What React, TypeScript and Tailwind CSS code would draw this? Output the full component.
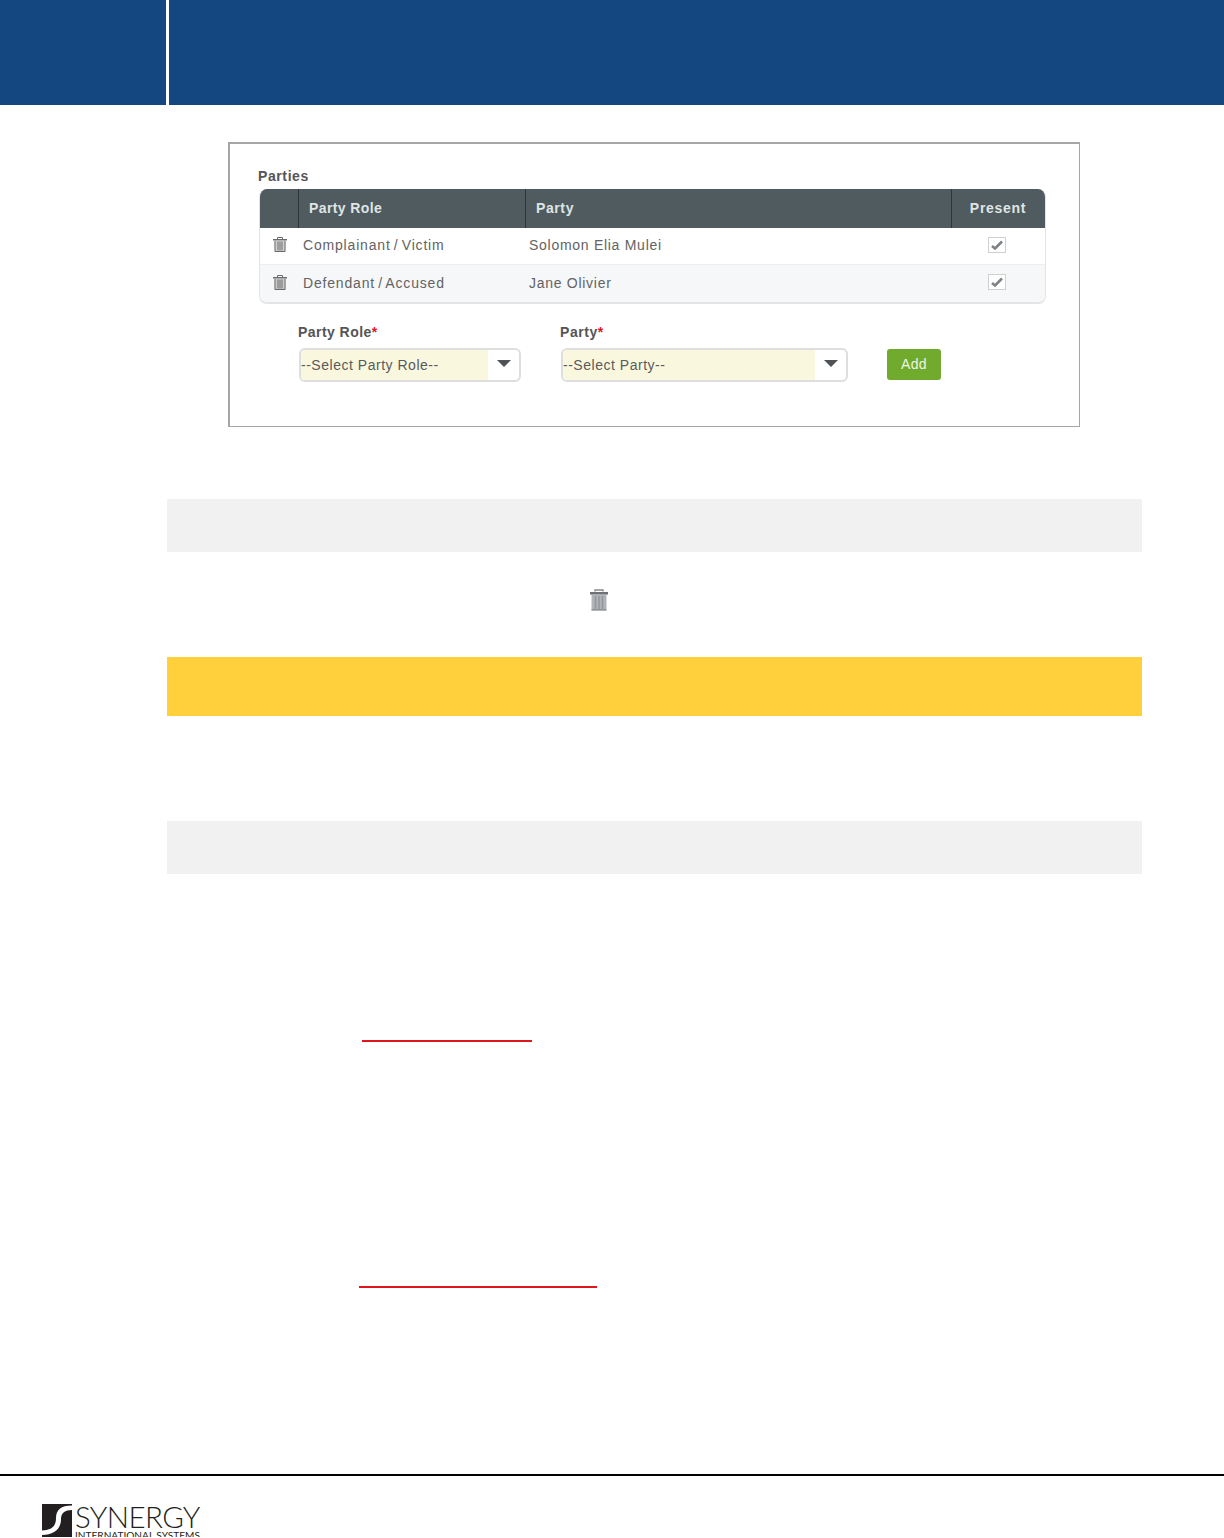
import React from 'react';

const TrashIcon: React.FC<{ className?: string }> = ({ className }) => (
  <svg viewBox="0 0 14 15" className={className} fill="none">
    <path d="M4.5 2V0.5H9.5V2" stroke="currentColor" strokeWidth="1" />
    <rect x="0" y="2" width="14" height="1.5" fill="currentColor" />
    <path d="M1.5 4H12.5V15H1.5Z" fill="currentColor" opacity="0.3" />
    <path d="M2 4V14.5H12V4M5 4.5V13.5M7 4.5V13.5M9 4.5V13.5" stroke="currentColor" strokeWidth="1" />
  </svg>
);

const Checked: React.FC = () => (
  <span className="flex h-[16px] w-[18px] shrink-0 items-center justify-center border border-[#d0d0d0] bg-white">
    <svg viewBox="0 0 16 14" className="h-[14px] w-[16px]" fill="none">
      <path d="M3 8L6 10.5L13 3.5" stroke="#7f8385" strokeWidth="2.6" />
    </svg>
  </span>
);

const rows = [
  { role: 'Complainant / Victim', party: 'Solomon Elia Mulei', bg: 'bg-white', border: 'border-b border-[#eceef0] pb-[2px]', iconPad: 'pb-[1px]' },
  { role: 'Defendant / Accused', party: 'Jane Olivier', bg: 'bg-[#f6f7f9]', border: '', iconPad: 'pb-[3px]' },
];

const SelectBox: React.FC<{ label: string; widthClass: string; fillClass: string }> = ({ label, widthClass, fillClass }) => (
  <div className={`ml-[1px] flex h-[34px] ${widthClass} overflow-hidden rounded-[6px] border-2 border-[#dedede] bg-white`}>
    <div className={`flex ${fillClass} items-center bg-[#f9f8df] text-[14px] tracking-[0.52px] text-[#5a5a5a]`}>{label}</div>
    <div className="flex flex-1 justify-center pt-[10px]">
      <span className="h-0 w-0 border-x-[7px] border-t-[7px] border-x-transparent border-t-[#4f5355]" />
    </div>
  </div>
);

const PartiesFigure: React.FC = () => (
  <div className="ml-[228px] mt-[37px] h-[285px] w-[852px] border-2 border-r border-b border-[#a6a6a6] bg-white pl-[28px] pt-[23px]">
    <div className="text-[14px] font-bold leading-[18px] tracking-[0.6px] text-[#555]">Parties</div>
    <div className="ml-[1px] mt-[4px] w-[787px] overflow-hidden rounded-[8px] border-b-2 border-x border-[#e2e4e6]">
      <div className="flex h-[39px] bg-[#4f5b5e] text-[14px] font-bold text-[#dfe4e4]">
        <div className="w-[39px] border-r border-[#2f3638]" />
        <div className="flex w-[227px] items-center border-r border-[#2f3638] pl-[10px] tracking-[0.4px]">Party Role</div>
        <div className="flex w-[426px] items-center border-r border-[#2f3638] pl-[10px] tracking-[0.6px]">Party</div>
        <div className="flex flex-1 items-center justify-center pr-[1px] tracking-[0.7px]">Present</div>
      </div>
      {rows.map(r => (
        <div key={r.role} className={`flex h-[37px] items-center ${r.bg} ${r.border} text-[14px] tracking-[0.72px] text-[#636363]`}>
          <div className={`flex w-[39px] justify-center ${r.iconPad}`}>
            <TrashIcon className="h-[15px] w-[14px] text-[#6b6b6b]" />
          </div>
          <div className="ml-[4px] w-[226px] tracking-[0.82px] [word-spacing:-1.5px]">{r.role}</div>
          <div className="flex-1">{r.party}</div>
          <div className={`flex w-[96px] justify-center ${r.iconPad}`}>
            <Checked />
          </div>
        </div>
      ))}
    </div>
    <div className="ml-[40px] mt-[18px] flex items-start">
      <div className="mr-[39px]">
        <div className="text-[14px] font-bold leading-[20px] tracking-[0.45px] text-[#555]">
          Party Role<span className="text-[#e0151b]">*</span>
        </div>
        <div className="mt-[6px]">
          <SelectBox label="--Select Party Role--" widthClass="w-[222px]" fillClass="w-[187px]" />
        </div>
      </div>
      <div className="mr-[39px]">
        <div className="text-[14px] font-bold leading-[20px] tracking-[0.55px] text-[#555]">
          Party<span className="text-[#e0151b]">*</span>
        </div>
        <div className="mt-[6px]">
          <SelectBox label="--Select Party--" widthClass="w-[287px]" fillClass="w-[252px]" />
        </div>
      </div>
      <button className="mt-[27px] flex h-[31px] w-[54px] items-center justify-center rounded-[3px] bg-[#70ab2d] text-[14px] tracking-[0.3px] text-[#eef5e2]">
        Add
      </button>
    </div>
  </div>
);

const Logo: React.FC = () => (
  <div className="ml-[42px] mt-[28px] flex h-[33px] items-start overflow-hidden">
    <svg viewBox="0 0 30 33" className="h-[33px] w-[30px] shrink-0">
      <rect width="30" height="33" fill="#231f20" />
      <path d="M30 1.5C19 1.5 14 6 14 14C14 22 10 26 0 26.5V31C12 31 19 25 19 15C19 9 23 6 30 6Z" fill="#fff" />
    </svg>
    <div className="ml-[3px] flex flex-col">
      <div className="text-[29.5px] font-light leading-[25px] tracking-[-0.6px] text-[#231f20] [font-family:Lato,sans-serif]">SYNERGY</div>
      <div className="mt-[1px] text-[10.1px] leading-[10px] text-[#231f20] [font-family:Lato,sans-serif]">INTERNATIONAL SYSTEMS</div>
    </div>
  </div>
);

export default function App() {
  return (
    <div className="flex h-[1538px] w-[1224px] flex-col overflow-hidden bg-white [font-family:'Liberation_Sans',Arial,sans-serif]">
      <header className="flex h-[105px] shrink-0">
        <div className="w-[166px] bg-[#14467f]" />
        <div className="ml-[3px] flex-1 bg-[#14467f]" />
      </header>

      <PartiesFigure />

      <div className="ml-[167px] mt-[72px] h-[53px] w-[975px] bg-[#f1f1f1]" />

      <div className="ml-[589px] mt-[37px] h-[22px]">
        <svg viewBox="0 0 20 22" className="h-[22px] w-[20px]">
          <path d="M6 2.5V1H14V2.5" fill="none" stroke="#85888a" strokeWidth="1.4" />
          <rect x="1" y="3" width="18" height="2.6" fill="#6f7275" />
          <rect x="2.5" y="6" width="15" height="15" fill="#b0b4b8" />
          <path d="M6.5 7V20M10 7V20M13.5 7V20" stroke="#92969a" strokeWidth="1.5" />
          <path d="M2.5 21H17.5" stroke="#7d8083" strokeWidth="1.2" />
        </svg>
      </div>

      <div className="ml-[167px] mt-[46px] h-[59px] w-[975px] bg-[#ffcf3c]" />
      <div className="ml-[167px] mt-[105px] h-[53px] w-[975px] bg-[#f1f1f1]" />

      <div className="ml-[362px] mt-[166px] h-[2px] w-[170px] bg-[#e0181c]" />
      <div className="ml-[359px] mt-[244px] h-[2px] w-[238px] bg-[#e0181c]" />

      <div className="mt-[186px] h-[2px] w-full shrink-0 bg-black" />
      <Logo />
    </div>
  );
}
